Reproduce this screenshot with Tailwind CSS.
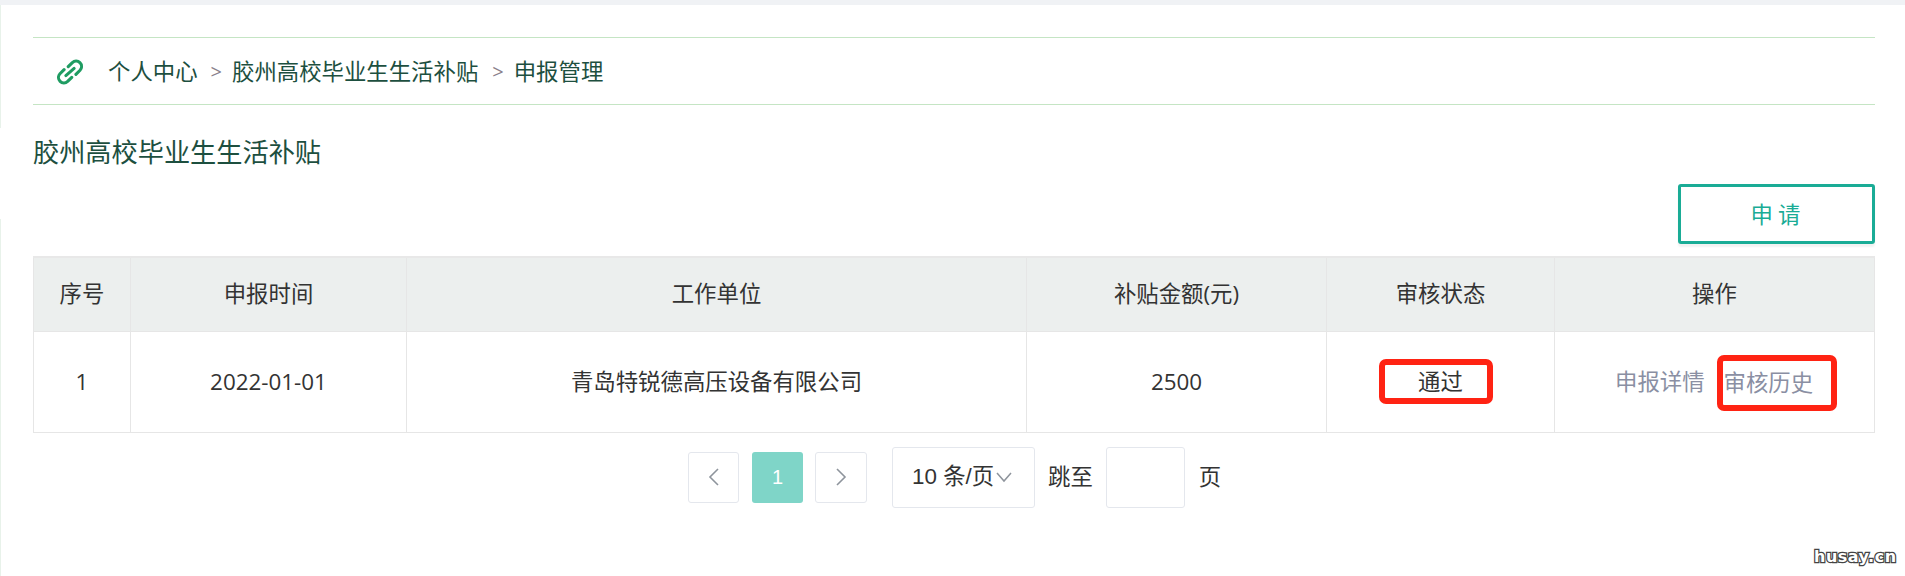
<!DOCTYPE html>
<html lang="zh-CN">
<head>
  <meta charset="UTF-8" />
  <title>申报管理</title>
  <script src="https://cdn.jsdelivr.net/npm/@tailwindcss/browser@4"></script>
</head>
<body class="bg-white">
  <div class="relative h-[576px] w-[1905px] overflow-hidden font-['Open_Sans','Noto_Sans_CJK_SC',sans-serif] text-[22.4px] text-[#333]">
    <div class="h-[5px] bg-[#f0f2f5]"></div>

    <!-- thin rail left on the page edge, broken in the middle -->
    <div class="absolute left-0 top-[5px] h-[123px] w-[1px] bg-[#e8f2ea]"></div>
    <div class="absolute bottom-0 left-0 top-[219px] w-[1px] bg-[#e8f2ea]"></div>

    <div class="pl-[33px] pr-[30px] pt-[32px]">
      <!-- breadcrumb -->
      <div class="flex h-[68px] items-center border-y border-[#c5e5c4] pt-[2px] text-[#1d4f3f]">
        <svg class="ml-[24px] mr-[25px] h-[26px] w-[26px]" viewBox="2 1.5 22 22" fill="none" stroke="#1f9c62" stroke-width="2.6" stroke-linecap="round" stroke-linejoin="round">
          <path d="M11.5 8 15 4.5a4.6 4.6 0 0 1 6.5 6.5L18 14.5" />
          <path d="M14.5 17 11 20.5A4.6 4.6 0 0 1 4.5 14L8 10.5" />
          <path d="M9.5 15.5l7-6" />
        </svg>
        <span>个人中心</span>
        <span class="ml-[13px] mr-[10px] text-[20px] text-[#8a7f8c]">&gt;</span>
        <span>胶州高校毕业生生活补贴</span>
        <span class="ml-[14px] mr-[10px] text-[20px] text-[#8a7f8c]">&gt;</span>
        <span>申报管理</span>
      </div>

      <h2 class="mt-[29px] text-[26.2px] leading-[36px] font-normal text-[#1d4f3f]">胶州高校毕业生生活补贴</h2>

      <div class="mt-[14px] flex justify-end">
        <button class="h-[60px] w-[197px] rounded-[3px] border-[3px] border-[#1aac96] pl-[3px] pt-[1px] text-[22.4px] tracking-[5px] text-[#1aac96] shadow-[0_3px_2px_#f2f2f2]">申请</button>
      </div>

      <!-- table -->
      <table class="mt-[12px] w-full table-fixed border-collapse border-t-2 border-t-[#e8e8e8] text-center">
        <colgroup>
          <col class="w-[97px]" />
          <col class="w-[276px]" />
          <col class="w-[620px]" />
          <col class="w-[300px]" />
          <col class="w-[228px]" />
          <col />
        </colgroup>
        <thead>
          <tr class="h-[74px] bg-[#ecefee]">
            <th class="border border-[#e6e6e6] font-normal">序号</th>
            <th class="border border-[#e6e6e6] font-normal">申报时间</th>
            <th class="border border-[#e6e6e6] font-normal">工作单位</th>
            <th class="border border-[#e6e6e6] font-normal">补贴金额(元)</th>
            <th class="border border-[#e6e6e6] font-normal">审核状态</th>
            <th class="border border-[#e6e6e6] font-normal">操作</th>
          </tr>
        </thead>
        <tbody>
          <tr class="h-[101px]">
            <td class="border border-[#e6e6e6]">1</td>
            <td class="border border-[#e6e6e6]">2022-01-01</td>
            <td class="border border-[#e6e6e6]">青岛特锐德高压设备有限公司</td>
            <td class="border border-[#e6e6e6]">2500</td>
            <td class="border border-[#e6e6e6]">
              <span class="mr-[10px] inline-flex h-[45px] w-[114px] items-center justify-center rounded-[7px] border-[6px] border-[#ff2313] pl-[10px]">通过</span>
            </td>
            <td class="border border-[#e6e6e6] text-[#8a8fa3]">
              <div class="flex items-center pl-[60px]">
                <span>申报详情</span>
                <span class="ml-[12px] mt-[2px] inline-flex h-[56px] w-[120px] items-center rounded-[7px] border-[6px] border-[#ff2313] pl-[1px]">审核历史</span>
              </div>
            </td>
          </tr>
        </tbody>
      </table>

      <!-- pagination -->
      <div class="mt-[14px] flex items-center pl-[655px]">
        <button class="flex h-[51px] w-[51px] items-center justify-center rounded-[3px] border border-[#e4e7ed]">
          <svg class="h-[20px] w-[14px]" viewBox="0 0 14 20" fill="none" stroke="#8e949c" stroke-width="1.6"><path d="M11 2 3 10l8 8" /></svg>
        </button>
        <button class="ml-[13px] flex h-[51px] w-[51px] items-center justify-center rounded-[3px] bg-[#7fd5c8] font-['Liberation_Sans',sans-serif] text-[20px] text-white">1</button>
        <button class="ml-[12px] flex h-[51px] w-[52px] items-center justify-center rounded-[3px] border border-[#e4e7ed]">
          <svg class="h-[20px] w-[14px]" viewBox="0 0 14 20" fill="none" stroke="#8e949c" stroke-width="1.6"><path d="m3 2 8 8-8 8" /></svg>
        </button>
        <div class="ml-[25px] flex h-[61px] w-[143px] items-center rounded-[3px] border border-[#e4e7ed] pl-[19px] font-['Liberation_Sans','Noto_Sans_CJK_SC',sans-serif]">
          <span>10 条/页</span>
          <svg class="ml-[1px] h-[14px] w-[18px]" viewBox="0 0 18 14" fill="none" stroke="#8e949c" stroke-width="1.5"><path d="m2 3 7 8 7-8" /></svg>
        </div>
        <span class="ml-[13px]">跳至</span>
        <div class="ml-[13px] h-[61px] w-[79px] rounded-[3px] border border-[#e4e7ed]"></div>
        <span class="ml-[14px]">页</span>
      </div>
    </div>

    <!-- watermark over the page corner -->
    <span class="absolute left-[1814px] top-[545px] font-['DejaVu_Sans',sans-serif] text-[16px] font-bold tracking-[0.5px] text-white [-webkit-text-stroke:2.5px_#444] [paint-order:stroke_fill]">husay.cn</span>
  </div>
</body>
</html>
